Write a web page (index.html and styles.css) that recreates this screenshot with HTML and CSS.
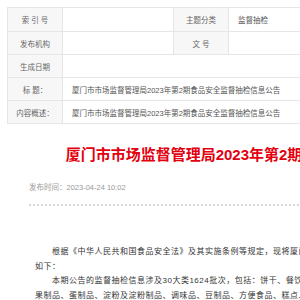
FILE: index.html
```html
<!DOCTYPE html>
<html lang="zh-CN">
<head>
    <meta charset="UTF-8">
    <meta name="viewport" content="width=device-width, initial-scale=1.0">
    <title>厦门市市场监督管理局2023年第2期食品安全监督抽检信息公告</title>
    <link rel="stylesheet" href="styles.css">
</head>
<body>
    <div class="page">
        <!-- 信息公开属性表 -->
        <table class="info">
            <colgroup>
                <col class="col-label">
                <col class="col-value">
                <col class="col-label">
                <col>
            </colgroup>
            <tr>
                <th>索 引 号</th>
                <td></td>
                <th>主题分类</th>
                <td>监督抽检</td>
            </tr>
            <tr>
                <th>发布机构</th>
                <td></td>
                <th>文 号</th>
                <td></td>
            </tr>
            <tr>
                <th>生成日期</th>
                <td colspan="3"></td>
            </tr>
            <tr>
                <th>标 题：</th>
                <td colspan="3">厦门市市场监督管理局2023年第2期食品安全监督抽检信息公告</td>
            </tr>
            <tr>
                <th>内容概述：</th>
                <td colspan="3">厦门市市场监督管理局2023年第2期食品安全监督抽检信息公告</td>
            </tr>
        </table>

        <!-- 正文 -->
        <div class="article">
            <h1 class="title">厦门市市场监督管理局2023年第2期食品安全监督抽检信息公告</h1>
            <div class="meta">发布时间：2023-04-24 10:02</div>
            <div class="content">
                <p>根据《中华人民共和国食品安全法》及其实施条例等规定，现将厦门市部分食品安全监督抽检的信息公告如下：</p>
                <p>本期公告的监督抽检信息涉及30大类1624批次，包括：饼干、餐饮食品、茶叶及相关制品、炒货食品及坚果制品、蛋制品、淀粉及淀粉制品、调味品、豆制品、方便食品、糕点、罐头、酒类、粮食加工品、肉制品、乳制品、食用油、油脂及其制品、蔬菜制品、水果制品、速冻食品、糖果制品、饮料等。</p>
            </div>
        </div>
    </div>
</body>
</html>
```

FILE: styles.css
```css
html {
    overflow: hidden;
}

body {
    margin: 0;
    font-family: "Liberation Sans", "Noto Sans CJK SC", sans-serif;
    background: #fff;
    color: #333;
}

.page {
    width: 510px;
    padding: 7px;
}

/* 属性表 */
.info {
    width: 510px;
    border-collapse: collapse;
    table-layout: fixed;
    font-size: 7.5px;
}

.col-label {
    width: 55px;
}

.col-value {
    width: 111px;
}

.info tr {
    height: 23px;
}

.info tr:first-child {
    height: 24px;
}

.info th,
.info td {
    border: 1px solid #e6e6e6;
    padding: 0 9px;
    white-space: nowrap;
    overflow: hidden;
}

.info th {
    background: #f7f7f7;
    color: #666;
    font-weight: normal;
    text-align: center;
    padding: 0;
}

.info td {
    color: #555;
    text-align: left;
}

/* 正文 */
.article {
    padding: 0 22px;
}

.title {
    margin: 21px 0 0;
    padding-left: 24px;
    font-size: 15px;
    line-height: 20px;
    font-weight: bold;
    color: #e3000f;
    text-align: center;
    white-space: nowrap;
}

.meta {
    margin-top: 17px;
    padding-bottom: 10px;
    font-size: 7.5px;
    line-height: 12px;
    color: #999;
    border-bottom: 2px dotted #d8d8d8;
}

.content {
    width: 414px;
    margin: 39px 0 0 6px;
    font-size: 8px;
    line-height: 14.5px;
    letter-spacing: 0.5px;
    color: #333;
}

.content p {
    margin: 0;
    text-indent: 17px;
}
```
